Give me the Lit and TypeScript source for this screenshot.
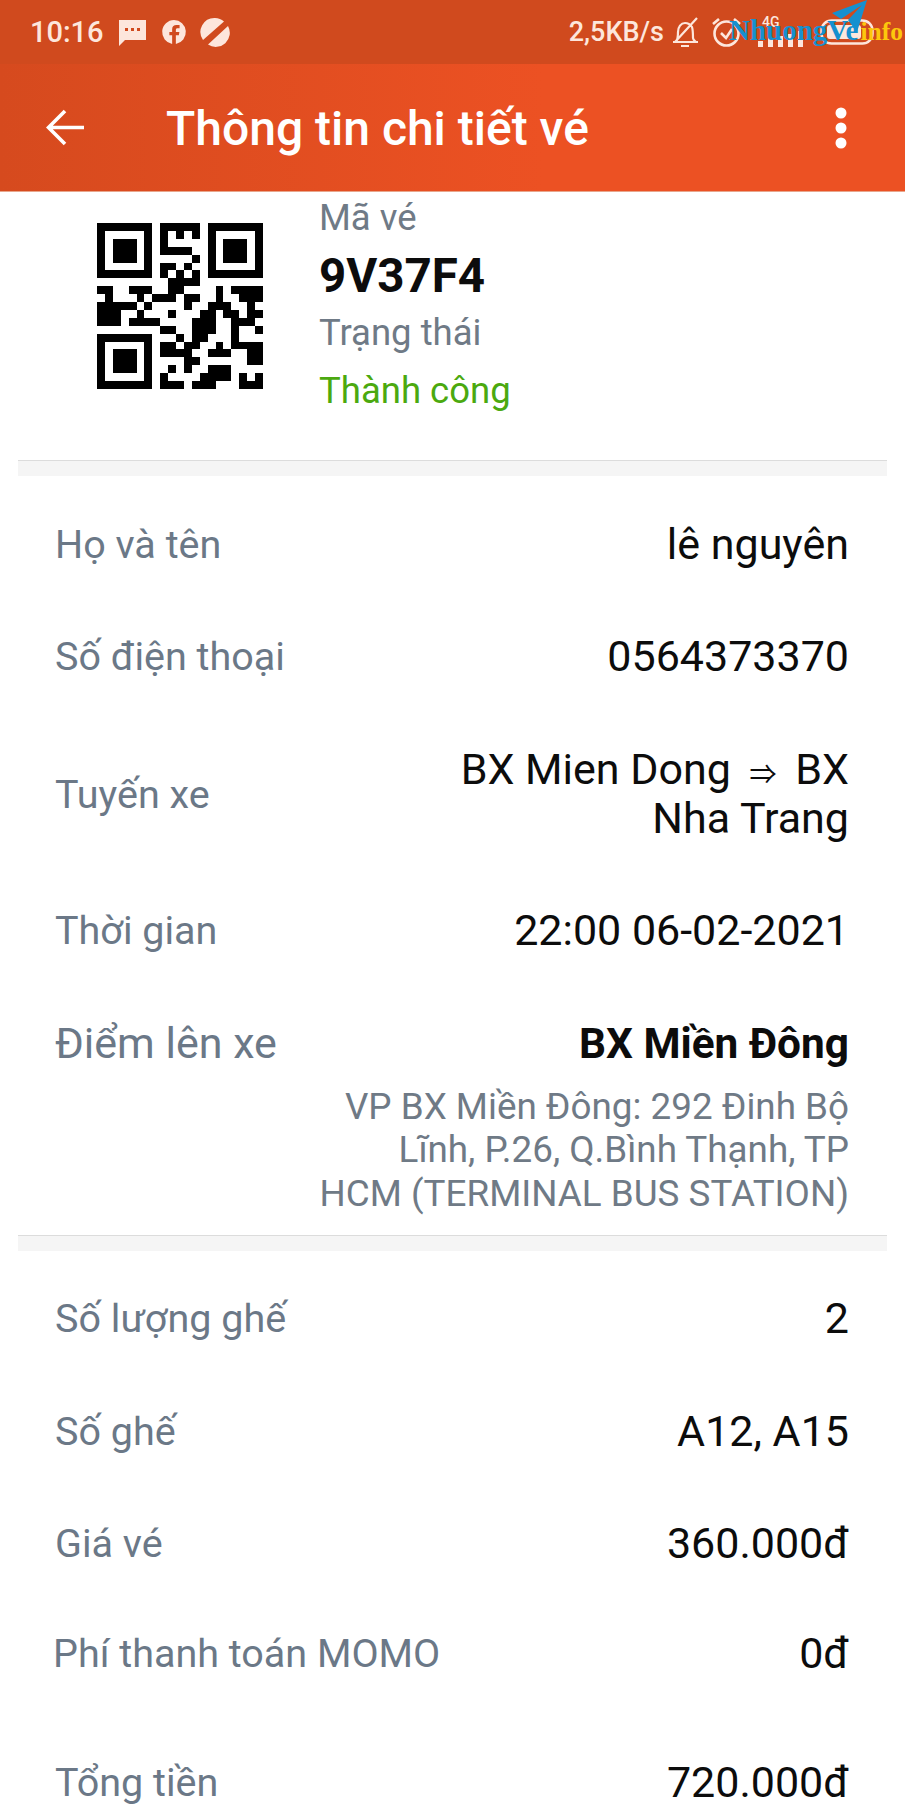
import { LitElement, html, css, svg } from 'lit'
import { customElement } from 'lit/decorators.js'

// 21x21 modules, finder patterns are drawn separately
const QR_CELLS: Record<number, number[]> = {
	0: [8, 9, 10, 11, 12],
	1: [8, 10, 12],
	2: [8],
	3: [8, 9, 10, 11],
	4: [12],
	5: [8, 9, 11],
	6: [8, 10, 12],
	7: [9, 10, 11, 12],
	8: [0, 1, 4, 5, 6, 9, 10, 15, 17, 18, 19, 20],
	9: [1, 5, 7, 8, 9, 11, 12, 15, 18, 19, 20],
	10: [0, 1, 2, 3, 4, 6, 11, 14, 15, 16, 19],
	11: [0, 1, 2, 5, 9, 13, 14, 16, 17, 19, 20],
	12: [0, 1, 2, 4, 5, 6, 7, 12, 13, 14, 17, 18, 19],
	13: [8, 9, 12, 13, 14, 17, 20],
	14: [10, 12, 13, 17],
	15: [8, 9, 11, 12, 15, 17, 18, 19, 20],
	16: [8, 9, 10, 11, 14, 15, 16, 19, 20],
	17: [11, 12, 19, 20],
	18: [9, 11, 14, 15, 16],
	19: [8, 13, 14, 15, 16, 18, 20],
	20: [8, 9, 10, 12, 13, 14, 18, 19, 20],
}

const finder = (x: number, y: number) => svg`
	<path d="M${x} ${y}h7v7h-7zM${x + 1} ${y + 1}v5h5v-5z" fill-rule="evenodd"></path>
	<rect x=${x + 2} y=${y + 2} width="3" height="3"></rect>
`

@customElement('app-root')
export class AppRoot extends LitElement {
	static styles = css`
		:host {
			display: block;
			width: 905px;
			height: 1810px;
			overflow: hidden;
			position: relative;
			background: #fff;
			font-family: Roboto, 'Noto Sans', sans-serif;
			color: #0c0c0c;
		}
		.status {
			height: 64px;
			box-sizing: border-box;
			background: #d04a1e;
			color: #fde6dc;
			display: flex;
			align-items: center;
			padding: 0 0 0 30px;
			font-size: 29px;
			font-weight: 500;
		}
		.status svg {
			display: block;
			fill: #fde6dc;
		}
		.status-left {
			display: flex;
			align-items: center;
		}
		.status-left svg:nth-of-type(1) {
			margin-left: 14px;
		}
		.status-left svg:nth-of-type(2) {
			margin-left: 14px;
		}
		.status-left svg:nth-of-type(3) {
			margin-left: 13px;
		}
		.status-right {
			margin-left: auto;
			display: flex;
			align-items: center;
			padding-right: 31px;
		}
		.speed {
			font-size: 27px;
		}
		.bell {
			margin-left: 8px;
			fill: none !important;
			stroke: #fde6dc;
			stroke-width: 2.2;
		}
		.alarm {
			margin-left: 13px;
			fill: none !important;
			stroke: #fde6dc;
			stroke-width: 2.6;
		}
		.signal {
			margin-left: 17px;
		}
		.battery {
			margin-left: 14px;
		}
		.net {
			position: absolute;
			left: 762px;
			top: 14px;
			font-size: 14px;
			font-weight: 500;
			color: #fde6dc;
		}
		.watermark {
			position: absolute;
			left: 729px;
			top: 14px;
			font-family: 'Liberation Serif', serif;
			font-size: 29px;
			font-weight: 700;
			color: #1690cf;
			white-space: nowrap;
		}
		.watermark span {
			color: #fdc70c;
			font-size: 25.5px;
			margin-left: 2px;
		}
		.plane {
			position: absolute;
			left: 832px;
			top: 0;
		}
		.bar {
			height: 128px;
			box-sizing: border-box;
			background: linear-gradient(90deg, #d64a1e, #ec5123 60%);
			border-bottom: 1px solid #e8a68c;
			color: #fff;
			display: flex;
			align-items: center;
			padding: 0 57px 0 46px;
		}
		.bar svg {
			display: block;
		}
		.title {
			font-size: 48px;
			font-weight: 500;
			margin-left: 82px;
			flex: 1;
			line-height: 1;
			padding-top: 2px;
		}
		.ticket {
			display: flex;
			padding: 1px 0 0 97px;
			height: 268px;
			box-sizing: border-box;
		}
		.qr {
			width: 166px;
			height: 166px;
			margin-top: 30px;
			margin-right: 56px;
		}
		.meta {
			display: flex;
			flex-direction: column;
		}
		.meta div {
			height: 57.7px;
			line-height: 50px;
			font-size: 36.5px;
			color: #6f7a86;
		}
		.meta .code {
			font-size: 47.5px;
			font-weight: 700;
			color: #0c0c0c;
		}
		.meta .ok {
			color: #4ba90f;
		}
		.rule {
			height: 15px;
			margin: 0 18px;
			background: #f5f5f5;
			border-top: 1px solid #dcdcdc;
		}
		.rows {
			padding: 0 56px 0 55px;
		}
		.row {
			display: flex;
			justify-content: space-between;
			align-items: center;
			gap: 30px;
			line-height: 49px;
		}
		.label {
			font-size: 39.5px;
			color: #6b7887;
			white-space: nowrap;
		}
		.big {
			font-size: 43px;
		}
		.value {
			font-size: 43px;
			text-align: right;
			color: #0c0c0c;
		}
		.route {
			max-width: 420px;
		}
		.arrow {
			font-family: 'Noto Sans CJK JP', sans-serif;
			font-size: 27px;
			line-height: 0;
			margin: 0 8px;
		}
		.pickup {
			font-weight: 700;
			font-size: 42.4px;
		}
		.address {
			margin-top: 17px;
			margin-bottom: 20px;
			font-size: 36.8px;
			line-height: 43.4px;
			color: #6f7a86;
			text-align: right;
			white-space: nowrap;
		}
		.fee .label {
			margin-left: -2px;
		}
	`

	private qr() {
		const cells = Object.entries(QR_CELLS).flatMap(([row, cols]) =>
			cols.map((c) => svg`<rect x=${c} y=${row} width="1" height="1"></rect>`),
		)
		return html`<svg class="qr" viewBox="0 0 21 21" shape-rendering="crispEdges">
			${finder(0, 0)} ${finder(14, 0)} ${finder(0, 14)} ${cells}
		</svg>`
	}

	private row(label: string, value: string, pad: string) {
		return html`<div class="row" style="padding-top:${pad}">
			<span class="label">${label}</span><span class="value">${value}</span>
		</div>`
	}

	render() {
		return html`
			<div class="status">
				<div class="status-left">
					<span>10:16</span>
					<svg width="29" height="27" viewBox="0 0 29 27">
						<path d="M1 1h27v20H7l-6 6zM7 9v3h3V9zM13 9v3h3V9zM19 9v3h3V9z" fill-rule="evenodd"></path>
					</svg>
					<svg width="26" height="26" viewBox="0 0 28 28">
						<path fill-rule="evenodd" d="M14 1a13 13 0 0 1 2 25.800V17.500h3.200l.6-3.500H16v-2c0-1.400.5-2 2-2h2V6.500h-3.500C14 6.500 12 8 12 11v3H9v3.500h3v9.300A13 13 0 0 1 14 1z"></path>
					</svg>
					<svg width="31" height="30" viewBox="0 0 31 30">
						<path d="M15 1a13.500 13.500 0 0 1 9 3.500L3 23A14 14 0 0 1 15 1zM28 9a14 14 0 0 1-20 18.500z"></path>
					</svg>
				</div>
				<div class="status-right">
					<span class="speed">2,5KB/s</span>
					<svg class="bell" width="27" height="30" viewBox="0 0 27 30">
						<path d="M1 25h25M4 25c2-3 2-6 2-10 0-5 3-9 7-9 3 0 5 1 7 4 1 3 1 8 1 11 0 2 2 3 3 4M9 29h8M3 25L25 1"></path>
					</svg>
					<svg class="alarm" width="29" height="30" viewBox="0 0 29 30">
						<circle cx="14.500" cy="16.500" r="12"></circle>
						<path d="M9 16l5 5 6-9M1 7l6-5M28 7l-6-5"></path>
					</svg>
					<svg class="signal" width="48" height="16" viewBox="0 0 48 16" style="margin-top:14px">
						<rect x="0" y="10" width="5" height="6"></rect>
						<rect x="10" y="7" width="5" height="9"></rect>
						<rect x="20" y="5" width="5" height="11"></rect>
						<rect x="30" y="3" width="5" height="13"></rect>
						<rect x="40" y="0" width="5" height="16"></rect>
					</svg>
					<svg class="battery" width="54" height="26" viewBox="0 0 54 26">
						<rect x="1.500" y="1.500" width="51" height="23" rx="10" fill="none" stroke="#fde6dc" stroke-width="2.500"></rect>
						<rect x="7" y="6" width="34" height="14" rx="3"></rect>
					</svg>
				</div>
			</div>
			<div class="net">4G</div>
			<div class="watermark">NhuongVe<span>info</span></div>
			<svg class="plane" width="36" height="33" viewBox="0 0 36 33">
				<path d="M0 13L35 0 25 32 16 20 30 5 9 19z" fill="#1690cf"></path>
			</svg>
			<div class="bar">
				<svg width="38" height="37" viewBox="0 0 38 37" fill="none" stroke="#fff" stroke-width="3.600">
					<path d="M38 18.500H3M19 2L2.500 18.500 19 35"></path>
				</svg>
				<div class="title">Thông tin chi tiết vé</div>
				<svg width="14" height="44" viewBox="0 0 14 44" fill="#fff">
					<circle cx="7" cy="7" r="5.500"></circle>
					<circle cx="7" cy="22" r="5.500"></circle>
					<circle cx="7" cy="37" r="5.500"></circle>
				</svg>
			</div>
			<div class="ticket">
				${this.qr()}
				<div class="meta">
					<div>Mã vé</div>
					<div class="code">9V37F4</div>
					<div>Trạng thái</div>
					<div class="ok">Thành công</div>
				</div>
			</div>
			<div class="rule"></div>
			<div class="rows">
				${this.row('Họ và tên', 'lê nguyên', '44px')}
				${this.row('Số điện thoại', '0564373370', '63px')}
				<div class="row" style="padding-top:64px">
					<span class="label">Tuyến xe</span>
					<span class="value route">BX Mien Dong <span class="arrow">⇒</span> BX Nha Trang</span>
				</div>
				${this.row('Thời gian', '22:00 06-02-2021', '63px')}
				<div class="row" style="padding-top:64px">
					<span class="label big">Điểm lên xe</span>
					<span class="value pickup">BX Miền Đông</span>
				</div>
				<div class="address">VP BX Miền Đông: 292 Đinh Bộ<br />Lĩnh, P.26, Q.Bình Thạnh, TP<br />HCM (TERMINAL BUS STATION)</div>
			</div>
			<div class="rule"></div>
			<div class="rows">
				${this.row('Số lượng ghế', '2', '43px')}
				${this.row('Số ghế', 'A12, A15', '64px')}
				${this.row('Giá vé', '360.000đ', '63px')}
				<div class="fee">${this.row('Phí thanh toán MOMO', '0đ', '61px')}</div>
				${this.row('Tổng tiền', '720.000đ', '80px')}
			</div>
		`
	}
}
